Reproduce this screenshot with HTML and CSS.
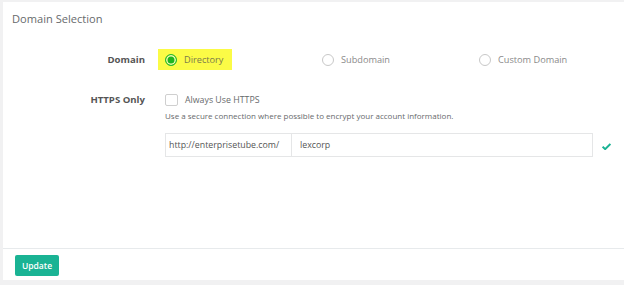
FILE: index.html
```html
<!DOCTYPE html>
<html lang="en">
<head>
  <meta charset="UTF-8">
  <title>Domain Selection</title>
  <link rel="stylesheet" href="styles.css">
</head>
<body>
  <div class="card">
    <div class="card-title">Domain Selection</div>

    <div class="card-body">
      <div class="form-row">
        <label class="row-label">Domain</label>
        <div class="radio-group">
          <label class="radio-option highlight">
            <span class="radio checked"></span>
            Directory
          </label>
          <label class="radio-option">
            <span class="radio"></span>
            Subdomain
          </label>
          <label class="radio-option">
            <span class="radio"></span>
            Custom Domain
          </label>
        </div>
      </div>

      <div class="form-row https-row">
        <label class="row-label">HTTPS Only</label>
        <div class="controls">
          <label class="check-option">
            <span class="checkbox"></span>
            Always Use HTTPS
          </label>
          <div class="help-text">Use a secure connection where possible to encrypt your account information.</div>

          <div class="url-row">
            <div class="input-group">
              <span class="addon">http://enterprisetube.com/</span>
              <span class="field">lexcorp</span>
            </div>
            <svg class="ok-icon" width="9" height="7" viewBox="0 0 9 7">
              <path d="M0.6 3.6 L3.2 6.1 L8.4 0.9" fill="none" stroke="#1ab394" stroke-width="2"/>
            </svg>
          </div>
        </div>
      </div>
    </div>

    <div class="card-footer">
      <button class="btn-update">Update</button>
    </div>
  </div>
</body>
</html>
```

FILE: styles.css
```css
html, body {
  margin: 0;
  padding: 0;
}
body {
  background-color: #f1f1f2;
  font-family: 'Open Sans', 'Liberation Sans', sans-serif;
  color: #676a6c;
  padding: 2px 0 5px 3px;
}
.card {
  background-color: #fff;
  height: 278px;
  display: flex;
  flex-direction: column;
}
.card-title {
  height: 34px;
  box-sizing: border-box;
  padding: 9px 9px 0;
  font-size: 11.1px;
  line-height: 16px;
  color: #676a6c;
}
.card-body {
  flex: 1;
  padding-top: 13px;
}
.form-row {
  display: grid;
  grid-template-columns: 162px 1fr;
  align-items: start;
}
.row-label {
  text-align: right;
  padding-right: 20px;
  font-size: 9.6px;
  font-weight: bold;
  color: #555;
  line-height: 21px;
}
.radio-group {
  display: grid;
  grid-template-columns: 157px 157px 157px;
}
.radio-option {
  display: flex;
  align-items: center;
  gap: 7px;
  height: 21px;
  font-size: 9.2px;
  color: #8a8a8a;
}
.radio-option.highlight {
  background-color: #fbfb46;
  margin-left: -7px;
  padding-left: 7px;
  width: 67px;
  color: #7a7a4a;
}
.radio {
  width: 12px;
  height: 12px;
  box-sizing: border-box;
  border: 1px solid #c8c8c8;
  border-radius: 50%;
  background-color: #fff;
}
.radio.checked {
  border: 1.5px solid #2dbb2d;
  background-color: #1fb51f;
  box-shadow: inset 0 0 0 1.5px #f4fbb0;
}
.https-row {
  margin-top: 23px;
}
.https-row .row-label {
  line-height: 14px;
}
.check-option {
  display: flex;
  align-items: center;
  gap: 7px;
  height: 14px;
  font-size: 8.8px;
  color: #676a6c;
}
.checkbox {
  width: 13px;
  height: 12px;
  box-sizing: border-box;
  border: 1px solid #cfcfcf;
  border-radius: 2px;
}
.help-text {
  margin-top: 3px;
  font-size: 8px;
  line-height: 11px;
  color: #676a6c;
}
.url-row {
  display: flex;
  align-items: center;
  margin-top: 12px;
}
.input-group {
  display: flex;
  width: 428px;
  height: 24px;
  box-sizing: border-box;
  border: 1px solid #e5e6e7;
  font-size: 8.8px;
  color: #555;
}
.addon {
  width: 126px;
  box-sizing: border-box;
  padding-left: 3px;
  line-height: 22px;
  border-right: 1px solid #e5e6e7;
}
.field {
  flex: 1;
  padding-left: 8px;
  line-height: 22px;
}
.ok-icon {
  margin-left: 9px;
  margin-top: 3px;
}
.card-footer {
  height: 32px;
  box-sizing: border-box;
  border-top: 1px solid #e7eaec;
  padding: 3px 0 0 12px;
}
.btn-update {
  width: 44px;
  height: 21px;
  padding: 0;
  border: none;
  border-radius: 2px;
  background-color: #1ab394;
  color: #fff;
  font-family: 'Open Sans', 'Liberation Sans', sans-serif;
  font-size: 8.5px;
  font-weight: 600;
}
```
